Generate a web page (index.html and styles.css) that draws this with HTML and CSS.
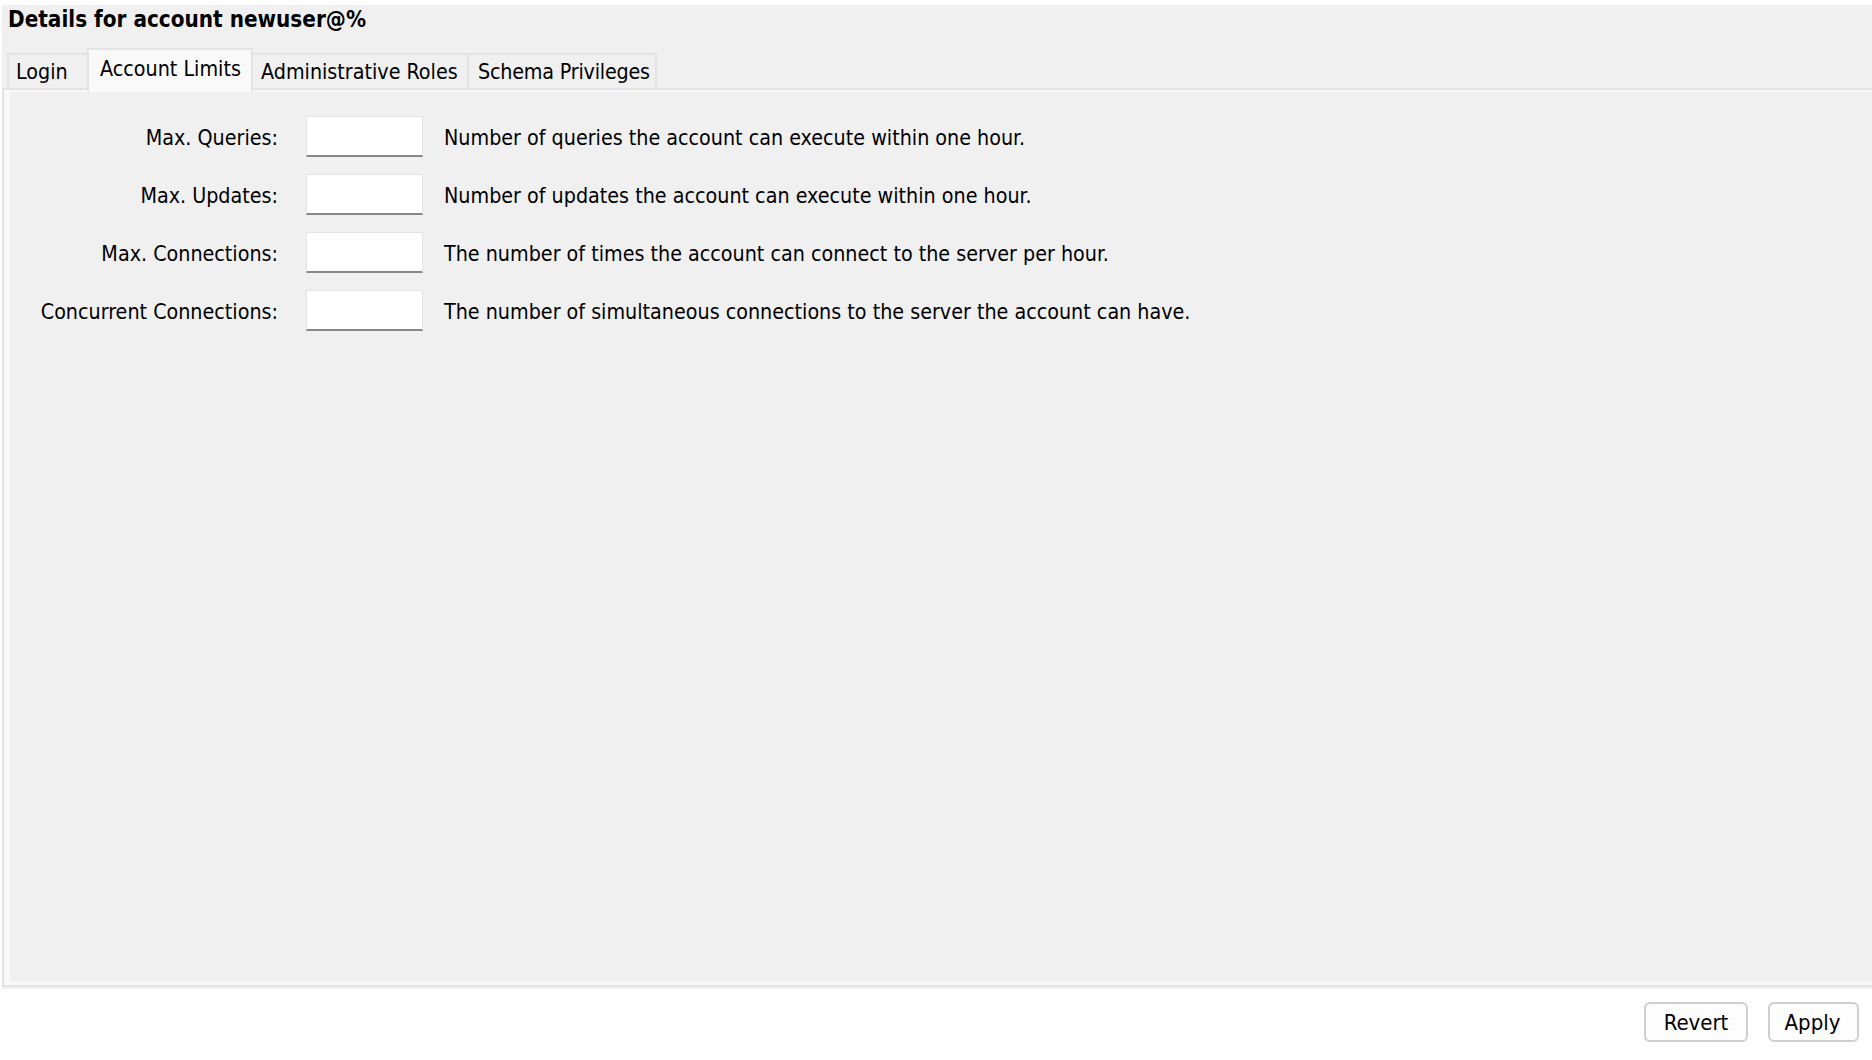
FILE: index.html
```html
<!DOCTYPE html>
<html>
<head>
<meta charset="utf-8">
<title>Details for account newuser@%</title>
<link rel="stylesheet" href="styles.css">
</head>
<body>
<div class="window">
  <div class="title">Details for account newuser@%</div>
  <div class="tabs">
    <div class="tab tab-login">Login</div>
    <div class="tab tab-active">Account Limits</div>
    <div class="tab tab-admin">Administrative Roles</div>
    <div class="tab tab-schema">Schema Privileges</div>
  </div>
  <div class="pane">
    <div class="page">
      <div class="form">
        <label class="lbl">Max. Queries:</label>
        <input class="field" type="text">
        <div class="desc">Number of queries the account can execute within one hour.</div>

        <label class="lbl">Max. Updates:</label>
        <input class="field" type="text">
        <div class="desc">Number of updates the account can execute within one hour.</div>

        <label class="lbl">Max. Connections:</label>
        <input class="field" type="text">
        <div class="desc">The number of times the account can connect to the server per hour.</div>

        <label class="lbl">Concurrent Connections:</label>
        <input class="field" type="text">
        <div class="desc">The number of simultaneous connections to the server the account can have.</div>
      </div>
    </div>
  </div>
</div>
<div class="buttons">
  <button class="btn btn-revert">Revert</button>
  <button class="btn btn-apply">Apply</button>
</div>
</body>
</html>
```
FILE: styles.css
```css
html, body {
  margin: 0;
  padding: 0;
  background: #ffffff;
}

body {
  font-family: "DejaVu Sans Condensed", "DejaVu Sans", sans-serif;
  font-size: 21.3px;
  color: #000000;
  width: 1872px;
  height: 1060px;
  overflow: hidden;
}

.window {
  margin: 5px 0 0 2px;
  height: 984px;
  box-sizing: border-box;
  padding-bottom: 2px;
  background: #f0f0f0;
  display: flex;
  flex-direction: column;
}

.title {
  font-weight: bold;
  font-size: 22.3px;
  line-height: 26px;
  padding: 1px 0 0 6px;
  height: 27px;
  white-space: nowrap;
}

.tabs {
  display: flex;
  align-items: flex-end;
  height: 40px;
  margin-top: 15px;
  padding-left: 5px;
  position: relative;
  z-index: 2;
}

.tab {
  box-sizing: border-box;
  height: 35px;
  line-height: 33px;
  border-top: 2px solid #e3e3e3;
  background: #f0f0f0;
  white-space: nowrap;
}

.tab-login {
  width: 80px;
  border-left: 2px solid #e3e3e3;
  padding-left: 7px;
}

.tab-active {
  width: 166px;
  height: 44px;
  margin-bottom: -4px;
  border-left: 2px solid #e3e3e3;
  border-right: 2px solid #e3e3e3;
  background: #f9f9f9;
  padding-left: 11px;
  padding-top: 2px;
}

.tab-admin {
  width: 214px;
  padding-left: 8px;
}

.tab-schema {
  width: 190px;
  border-left: 2px solid #e3e3e3;
  border-right: 2px solid #e3e3e3;
  padding-left: 9px;
  letter-spacing: -0.2px;
}

.pane {
  flex: 1;
  display: flex;
  border-top: 2px solid #e3e3e3;
  border-left: 2px solid #e3e3e3;
  border-bottom: 2px solid #e3e3e3;
  background: #f8f8f8;
  padding: 2px 0 4px 6px;
}

.page {
  flex: 1;
  background: #f0f0f0;
  padding-top: 24px;
}

.form {
  display: grid;
  grid-template-columns: 270px 117px 1fr;
  grid-auto-rows: 41px;
  column-gap: 26px;
  row-gap: 17px;
  align-items: center;
}

.lbl {
  text-align: right;
  white-space: nowrap;
  padding-top: 2px;
  margin-right: 2px;
}

.field {
  box-sizing: border-box;
  width: 117px;
  height: 41px;
  margin: 0;
  padding: 0 6px;
  background: #ffffff;
  border: 1px solid #e4e4e4;
  border-bottom: 2px solid #888888;
  border-radius: 0;
  font: inherit;
  outline: none;
}

.desc {
  white-space: nowrap;
  padding-top: 2px;
  margin-left: -5px;
}

.buttons {
  display: flex;
  justify-content: flex-end;
  gap: 20px;
  padding: 13px 13px 0 0;
}

.btn {
  box-sizing: border-box;
  height: 40px;
  margin: 0;
  padding: 0;
  border: 2px solid #cfcfcf;
  border-radius: 6px;
  background: #fdfdfd;
  font-family: "DejaVu Sans Condensed", "DejaVu Sans", sans-serif;
  font-size: 22px;
  color: #000000;
  line-height: 37px;
}

.btn-revert {
  width: 104px;
}

.btn-apply {
  width: 91px;
  padding-right: 2px;
}
```
